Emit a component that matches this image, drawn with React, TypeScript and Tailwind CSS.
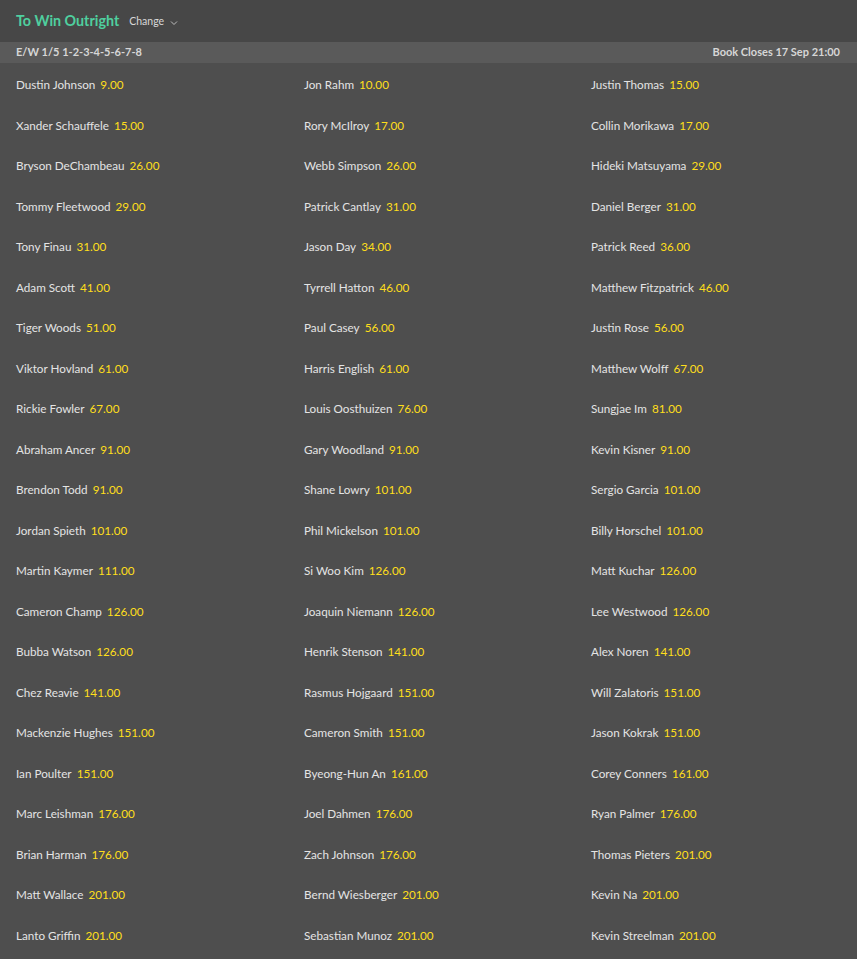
import React from 'react';

// name, odds — read row by row across three columns
const RUNNERS: Array<[string, string]> = [
  ['Dustin Johnson', '9.00'], ['Jon Rahm', '10.00'], ['Justin Thomas', '15.00'],
  ['Xander Schauffele', '15.00'], ['Rory McIlroy', '17.00'], ['Collin Morikawa', '17.00'],
  ['Bryson DeChambeau', '26.00'], ['Webb Simpson', '26.00'], ['Hideki Matsuyama', '29.00'],
  ['Tommy Fleetwood', '29.00'], ['Patrick Cantlay', '31.00'], ['Daniel Berger', '31.00'],
  ['Tony Finau', '31.00'], ['Jason Day', '34.00'], ['Patrick Reed', '36.00'],
  ['Adam Scott', '41.00'], ['Tyrrell Hatton', '46.00'], ['Matthew Fitzpatrick', '46.00'],
  ['Tiger Woods', '51.00'], ['Paul Casey', '56.00'], ['Justin Rose', '56.00'],
  ['Viktor Hovland', '61.00'], ['Harris English', '61.00'], ['Matthew Wolff', '67.00'],
  ['Rickie Fowler', '67.00'], ['Louis Oosthuizen', '76.00'], ['Sungjae Im', '81.00'],
  ['Abraham Ancer', '91.00'], ['Gary Woodland', '91.00'], ['Kevin Kisner', '91.00'],
  ['Brendon Todd', '91.00'], ['Shane Lowry', '101.00'], ['Sergio Garcia', '101.00'],
  ['Jordan Spieth', '101.00'], ['Phil Mickelson', '101.00'], ['Billy Horschel', '101.00'],
  ['Martin Kaymer', '111.00'], ['Si Woo Kim', '126.00'], ['Matt Kuchar', '126.00'],
  ['Cameron Champ', '126.00'], ['Joaquin Niemann', '126.00'], ['Lee Westwood', '126.00'],
  ['Bubba Watson', '126.00'], ['Henrik Stenson', '141.00'], ['Alex Noren', '141.00'],
  ['Chez Reavie', '141.00'], ['Rasmus Hojgaard', '151.00'], ['Will Zalatoris', '151.00'],
  ['Mackenzie Hughes', '151.00'], ['Cameron Smith', '151.00'], ['Jason Kokrak', '151.00'],
  ['Ian Poulter', '151.00'], ['Byeong-Hun An', '161.00'], ['Corey Conners', '161.00'],
  ['Marc Leishman', '176.00'], ['Joel Dahmen', '176.00'], ['Ryan Palmer', '176.00'],
  ['Brian Harman', '176.00'], ['Zach Johnson', '176.00'], ['Thomas Pieters', '201.00'],
  ['Matt Wallace', '201.00'], ['Bernd Wiesberger', '201.00'], ['Kevin Na', '201.00'],
  ['Lanto Griffin', '201.00'], ['Sebastian Munoz', '201.00'], ['Kevin Streelman', '201.00'],
];

export default function App() {
  return (
    <div className="min-h-screen bg-[#4e4e4e] font-['Lato','Liberation_Sans',sans-serif] text-[#e4e4e4]">
      {/* Market header */}
      <div className="flex h-[42px] items-center gap-[10px] bg-[#474747] px-4">
        <h1 className="text-[14.3px] font-bold text-[#4fcf9f]">To Win Outright</h1>
        <button className="flex items-center gap-1 pt-[1px] text-[10.5px] text-[#d8d8d8]">
          Change
          <svg width="8" height="6" viewBox="0 0 8 6" className="ml-0.5 mt-[2px]">
            <path d="M1 1.5 L4 4.5 L7 1.5" fill="none" stroke="#bdbdbd" strokeWidth="1" />
          </svg>
        </button>
      </div>

      {/* Each-way terms bar */}
      <div className="flex h-[21px] items-center justify-between bg-[#5a5a5a] px-4 text-[11px] font-bold text-[#d6d6d6]">
        <span>E/W 1/5 1-2-3-4-5-6-7-8</span>
        <span className="pr-[1px]">Book Closes 17 Sep 21:00</span>
      </div>

      {/* Runners */}
      <div className="grid grid-cols-[288px_287px_1fr] pt-[2px]">
        {RUNNERS.map(([name, odds]) => (
          <div key={name} className="flex h-[40.5px] items-center gap-[5px] pl-4 text-[11.7px]">
            <span>{name}</span>
            <span className="text-[#ffdf1b]">{odds}</span>
          </div>
        ))}
      </div>
    </div>
  );
}
